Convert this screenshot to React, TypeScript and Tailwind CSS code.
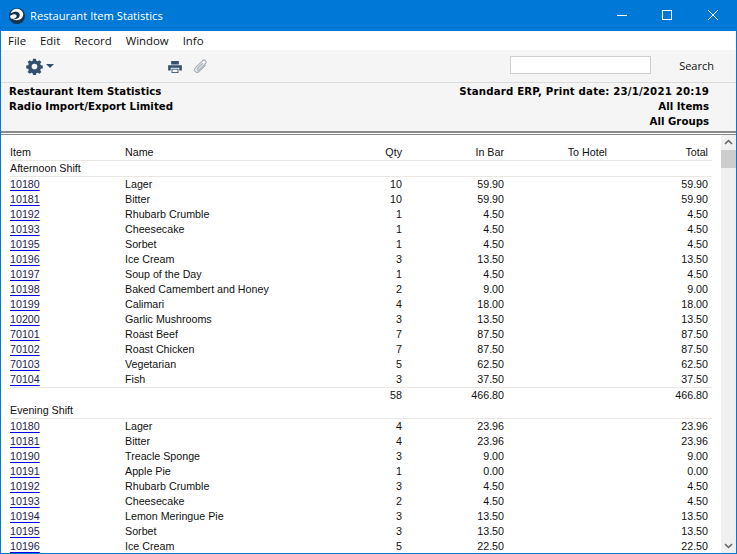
import React from "react";

type R = [string, string, string, string, string];
const afternoon: R[] = [
  ["10180", "Lager", "10", "59.90", "59.90"],
  ["10181", "Bitter", "10", "59.90", "59.90"],
  ["10192", "Rhubarb Crumble", "1", "4.50", "4.50"],
  ["10193", "Cheesecake", "1", "4.50", "4.50"],
  ["10195", "Sorbet", "1", "4.50", "4.50"],
  ["10196", "Ice Cream", "3", "13.50", "13.50"],
  ["10197", "Soup of the Day", "1", "4.50", "4.50"],
  ["10198", "Baked Camembert and Honey", "2", "9.00", "9.00"],
  ["10199", "Calimari", "4", "18.00", "18.00"],
  ["10200", "Garlic Mushrooms", "3", "13.50", "13.50"],
  ["70101", "Roast Beef", "7", "87.50", "87.50"],
  ["70102", "Roast Chicken", "7", "87.50", "87.50"],
  ["70103", "Vegetarian", "5", "62.50", "62.50"],
  ["70104", "Fish", "3", "37.50", "37.50"],
];
const evening: R[] = [
  ["10180", "Lager", "4", "23.96", "23.96"],
  ["10181", "Bitter", "4", "23.96", "23.96"],
  ["10190", "Treacle Sponge", "3", "9.00", "9.00"],
  ["10191", "Apple Pie", "1", "0.00", "0.00"],
  ["10192", "Rhubarb Crumble", "3", "4.50", "4.50"],
  ["10193", "Cheesecake", "2", "4.50", "4.50"],
  ["10194", "Lemon Meringue Pie", "3", "13.50", "13.50"],
  ["10195", "Sorbet", "3", "13.50", "13.50"],
  ["10196", "Ice Cream", "5", "22.50", "22.50"],
];

function Data({ r }: { r: R }) {
  return (
    <div className="grid grid-cols-[115px_200px_77px_102px_103px_101px] h-[15px] leading-[15px] w-[698px]">
      <span className="text-[#1c1c50] underline decoration-[#0000e0] underline-offset-2">{r[0]}</span>
      <span>{r[1]}</span>
      <span className="text-right">{r[2]}</span>
      <span className="text-right">{r[3]}</span>
      <span />
      <span className="text-right">{r[4]}</span>
    </div>
  );
}

export default function App() {
  return (
    <div className="w-[737px] h-[554px] overflow-hidden flex flex-col border border-[#0078d7] border-t-0 bg-white font-['Liberation_Sans',sans-serif] text-[10.700px] text-[#111]">
      <div className="h-[31px] shrink-0 bg-[#0078d7] flex items-center text-white">
        <svg viewBox="0 0 16 16" className="w-[16px] h-[16px] ml-[8px] mr-[5px]">
          <circle cx="8" cy="8" r="8" fill="#16324a" />
          <path d="M1.500 5.500C2.500 2 5.500.5 8.500.8c3 .4 5.300 2.500 5.700 5 .3 2.500-1 4.500-3.200 5.700-2.400 1.200-5.400 1-7.400-.3 2.200.3 4.800-.2 6.200-1.700 1.300-1.300 1.300-3.300 0-4.700C8.300 3.300 4.800 3.500 1.500 5.500z" fill="#f4f6f8" />
          <path d="M1 8c2-1.500 4-2 5.500-1.500S8 9 6.500 10 3 11 1.800 10.500z" fill="#f4f6f8" />
        </svg>
        <span className="text-[11.200px] font-['Open_Sans',sans-serif] pt-[1px]">Restaurant Item Statistics</span>
        <div className="ml-auto flex items-center">
          <svg viewBox="0 0 46 31" className="w-[46px] h-[31px]"><path d="M19 15.500h10" stroke="#fff" fill="none" /></svg>
          <svg viewBox="0 0 46 31" className="w-[46px] h-[31px]"><rect x="18.500" y="10.500" width="9" height="9" stroke="#fff" fill="none" /></svg>
          <svg viewBox="0 0 46 31" className="w-[46px] h-[31px]"><path d="M18 10l10 10M28 10L18 20" stroke="#fff" fill="none" /></svg>
        </div>
      </div>
      <div className="h-[19px] shrink-0 flex items-center gap-[14px] pl-[7px] text-[11.400px] font-['Open_Sans',sans-serif]">
        <span>File</span><span>Edit</span><span>Record</span><span>Window</span><span>Info</span>
      </div>
      <div className="h-[33px] shrink-0 bg-[#f5f5f5] border-b border-[#dcdcdc] flex items-center">
        <svg viewBox="0 0 24 24" className="w-[17px] h-[17px] ml-[25px] mt-[1px]" fill="#34506e">
          <path fillRule="evenodd" d="M10 1h4l.6 2.800 1.900.8 2.400-1.600 2.800 2.800-1.600 2.400.8 1.900 2.800.6v4l-2.800.6-.8 1.900 1.600 2.400-2.800 2.800-2.400-1.600-1.900.8-.6 2.800h-4l-.6-2.800-1.900-.8-2.400 1.600-2.800-2.800 1.600-2.400-.8-1.900-2.800-.6v-4l2.800-.6.8-1.900-1.600-2.400 2.800-2.800 2.400 1.600 1.900-.8L10 1zm2 7a4 4 0 100 8 4 4 0 000-8z" />
        </svg>
        <svg viewBox="0 0 8 4" className="w-[8px] h-[4px] ml-[3px]" fill="#34506e"><path d="M0 0h8L4 4z" /></svg>
        <svg viewBox="0 0 16 14" className="w-[16px] h-[12px] ml-[113px] mt-[2px]" fill="#34506e">
          <path d="M3.500 0h9v4h-9zM0 5h16v6h-3V8H3v3H0zM4 9h8v5H4z" />
          <path d="M5 10h6v3H5z" fill="#f5f5f5" />
        </svg>
        <svg viewBox="0 0 16 16" className="w-[15px] h-[15px] ml-[10px]" fill="none" stroke="#aab2ba" strokeWidth="1.300">
          <path d="M13.500 6.500L7 13c-1.500 1.500-3.500 1.500-4.500.5S1.500 10.500 3 9l7-7c1-1 2.500-1 3.300-.2s.8 2.200-.2 3.200L6.500 11.500c-.6.600-1.400.600-1.800.2s-.4-1.200.2-1.800L10.500 4.500" />
        </svg>
        <div className="w-[141px] h-[18px] ml-auto -mt-[2px] bg-white border border-[#cfcfcf]" />
        <span className="ml-[28px] mr-[22px] pt-[1px] text-[11px] font-['Open_Sans',sans-serif]">Search</span>
      </div>
      <div className="h-[50px] shrink-0 bg-[#f5f5f5] border-b-2 border-[#8a8a8a] flex justify-between pl-[8px] pr-[27px] pt-[1px] font-bold text-black leading-[15px] font-['DejaVu_Sans',sans-serif] text-[10.200px]">
        <div className="tracking-[0.05px]"><div>Restaurant Item Statistics</div><div>Radio Import/Export Limited</div></div>
        <div className="text-right"><div className="tracking-[0.18px]">Standard ERP, Print date: 23/1/2021 20:19</div><div>All Items</div><div>All Groups</div></div>
      </div>
      <div className="flex-1 min-h-0 flex border-t border-[#8a8a8a] mt-[1px]">
        <div className="flex-1 min-w-0 overflow-hidden pl-[9px] pr-[9px] pt-[10px]">
          <div className="grid grid-cols-[115px_200px_77px_102px_103px_101px] w-[702px] pr-[4px] h-[16px] leading-[15px] border-b border-[#eae6e2]">
            <span>Item</span><span>Name</span><span className="text-right">Qty</span><span className="text-right">In Bar</span><span className="text-right">To Hotel</span><span className="text-right">Total</span>
          </div>
          <div className="h-[16px] w-[702px] leading-[15px] border-b border-[#eae6e2]">Afternoon Shift</div>
          {afternoon.map((r) => <Data key={r[0]} r={r} />)}
          <div className="grid grid-cols-[115px_200px_77px_102px_103px_101px] w-[702px] pr-[4px] h-[16px] leading-[15px] border-t border-[#eae6e2]">
            <span /><span /><span className="text-right">58</span><span className="text-right">466.80</span><span /><span className="text-right">466.80</span>
          </div>
          <div className="h-[16px] w-[702px] leading-[15px] border-b border-[#eae6e2]">Evening Shift</div>
          {evening.map((r) => <Data key={r[0]} r={r} />)}
        </div>
        <div className="w-[15px] shrink-0 bg-[#f0f0f0] flex flex-col items-center">
          <svg viewBox="0 0 15 15" className="w-[15px] h-[15px] shrink-0" fill="none" stroke="#606060" strokeWidth="1.500"><path d="M4 9l3.500-3.500L11 9" /></svg>
          <div className="w-[15px] h-[18px] bg-[#cdcdcd]" />
          <div className="flex-1" />
          <svg viewBox="0 0 15 15" className="w-[15px] h-[15px] shrink-0" fill="none" stroke="#606060" strokeWidth="1.500"><path d="M4 6l3.500 3.500L11 6" /></svg>
        </div>
      </div>
    </div>
  );
}
